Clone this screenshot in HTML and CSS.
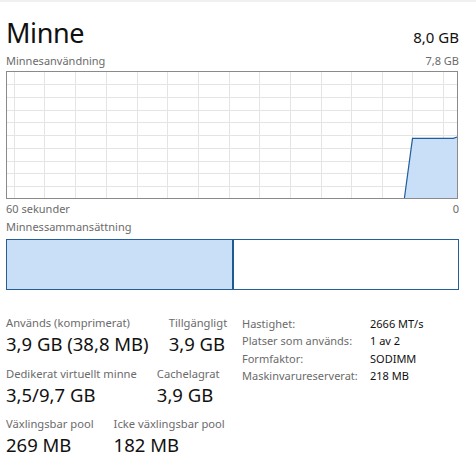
FILE: index.html
```html
<!DOCTYPE html>
<html lang="sv">
<head>
<meta charset="utf-8">
<title>Minne</title>
<link rel="stylesheet" href="styles.css">
</head>
<body>
<div class="strip"></div>
<main class="panel">
  <header class="header">
    <h1 class="title">Minne</h1>
    <span class="total">8,0 GB</span>
  </header>

  <div class="caption-row usage-label">
    <span>Minnesanvändning</span>
    <span>7,8 GB</span>
  </div>
  <svg class="graph" width="452" height="128" viewBox="0 0 452 128">
    <g class="grid">
      <line x1="0" y1="13.5" x2="452" y2="13.5"/>
      <line x1="0" y1="26.5" x2="452" y2="26.5"/>
      <line x1="0" y1="39.5" x2="452" y2="39.5"/>
      <line x1="0" y1="51.5" x2="452" y2="51.5"/>
      <line x1="0" y1="64.5" x2="452" y2="64.5"/>
      <line x1="0" y1="77.5" x2="452" y2="77.5"/>
      <line x1="0" y1="90.5" x2="452" y2="90.5"/>
      <line x1="0" y1="102.5" x2="452" y2="102.5"/>
      <line x1="0" y1="115.5" x2="452" y2="115.5"/>
      <line x1="8.5" y1="0" x2="8.5" y2="128"/>
      <line x1="38.5" y1="0" x2="38.5" y2="128"/>
      <line x1="69.5" y1="0" x2="69.5" y2="128"/>
      <line x1="100.5" y1="0" x2="100.5" y2="128"/>
      <line x1="131.5" y1="0" x2="131.5" y2="128"/>
      <line x1="161.5" y1="0" x2="161.5" y2="128"/>
      <line x1="192.5" y1="0" x2="192.5" y2="128"/>
      <line x1="223.5" y1="0" x2="223.5" y2="128"/>
      <line x1="253.5" y1="0" x2="253.5" y2="128"/>
      <line x1="284.5" y1="0" x2="284.5" y2="128"/>
      <line x1="315.5" y1="0" x2="315.5" y2="128"/>
      <line x1="345.5" y1="0" x2="345.5" y2="128"/>
      <line x1="376.5" y1="0" x2="376.5" y2="128"/>
      <line x1="406.5" y1="0" x2="406.5" y2="128"/>
      <line x1="437.5" y1="0" x2="437.5" y2="128"/>
    </g>
    <polygon class="area" points="398.3,128 406.5,67.3 447.3,67.3 452,65.7 452,128"/>
    <polyline class="curve" points="398.3,128 406.5,67.3 447.3,67.3 452,65.7"/>
    <rect class="frame" x="0.5" y="0.5" width="451" height="127"/>
  </svg>
  <div class="caption-row foot">
    <span>60 sekunder</span>
    <span>0</span>
  </div>

  <div class="caption-row comp-label">
    <span>Minnessammansättning</span>
  </div>
  <div class="composition">
    <div class="comp-used"></div>
    <div class="comp-free"></div>
  </div>

  <section class="stats">
    <div class="stats-left">
      <div class="stat-row">
        <div class="stat"><div class="stat-label">Används (komprimerat)</div><div class="stat-value">3,9 GB (38,8 MB)</div></div>
        <div class="stat"><div class="stat-label">Tillgängligt</div><div class="stat-value">3,9 GB</div></div>
      </div>
      <div class="stat-row">
        <div class="stat"><div class="stat-label">Dedikerat virtuellt minne</div><div class="stat-value">3,5/9,7 GB</div></div>
        <div class="stat"><div class="stat-label">Cachelagrat</div><div class="stat-value">3,9 GB</div></div>
      </div>
      <div class="stat-row">
        <div class="stat"><div class="stat-label">Växlingsbar pool</div><div class="stat-value">269 MB</div></div>
        <div class="stat"><div class="stat-label">Icke växlingsbar pool</div><div class="stat-value">182 MB</div></div>
      </div>
    </div>
    <dl class="stats-right">
      <dt>Hastighet:</dt><dd>2666 MT/s</dd>
      <dt>Platser som används:</dt><dd>1 av 2</dd>
      <dt>Formfaktor:</dt><dd>SODIMM</dd>
      <dt>Maskinvarureserverat:</dt><dd>218 MB</dd>
    </dl>
  </section>
</main>
</body>
</html>
```

FILE: styles.css
```css
html, body {
  margin: 0;
  padding: 0;
  background: #ffffff;
}

body {
  font-family: "Noto Sans", "Open Sans", sans-serif;
  color: #000;
}

.strip {
  height: 2px;
  background: #f0f0f0;
}

.panel {
  padding: 0 17px 0 6px;
}

.header {
  display: flex;
  justify-content: space-between;
  align-items: baseline;
  margin-top: 14px;
  height: 38px;
}

.title {
  margin: 0;
  font-size: 27px;
  font-weight: 400;
  line-height: 34px;
  letter-spacing: -0.4px;
  color: #111;
}

.total {
  font-size: 15px;
  color: #111;
}

.caption-row {
  display: flex;
  justify-content: space-between;
  font-size: 11px;
  line-height: 14px;
  color: #6b6b6b;
  height: 15px;
}

.usage-label {
  height: 17px;
}

.graph {
  display: block;
}

.grid line {
  stroke: #e4e4e4;
  stroke-width: 1;
}

.area {
  fill: #c9dff7;
}

.curve {
  fill: none;
  stroke: #1f5d9c;
  stroke-width: 1.2;
}

.frame {
  fill: none;
  stroke: #8a8a8a;
  stroke-width: 1;
}

.foot {
  margin-top: 3px;
  height: 16px;
}

.comp-label {
  margin-top: 2px;
  height: 17px;
}

.composition {
  display: flex;
  width: 451px;
  height: 49px;
  border: 1px solid #245f97;
  margin-top: 2px;
}

.comp-used {
  width: 225px;
  background: #c9dff7;
  border-right: 2px solid #1f5a93;
}

.comp-free {
  flex: 1;
  background: #fff;
}

.stats {
  display: flex;
  align-items: flex-start;
  margin-top: 25px;
}

.stats-left {
  width: 236px;
  display: flex;
  flex-direction: column;
  gap: 8.5px;
}

.stat-row {
  display: flex;
  gap: 20px;
}

.stat-label {
  font-size: 11.2px;
  line-height: 16px;
  color: #6b6b6b;
}

.stat-value {
  font-size: 18.5px;
  line-height: 26px;
  color: #111;
}

.stats-right {
  margin: 0;
  display: grid;
  grid-template-columns: 128px auto;
  font-size: 11px;
  line-height: 17.3px;
}

.stats-right dt {
  color: #6b6b6b;
}

.stats-right dd {
  margin: 0;
  color: #111;
}
```
